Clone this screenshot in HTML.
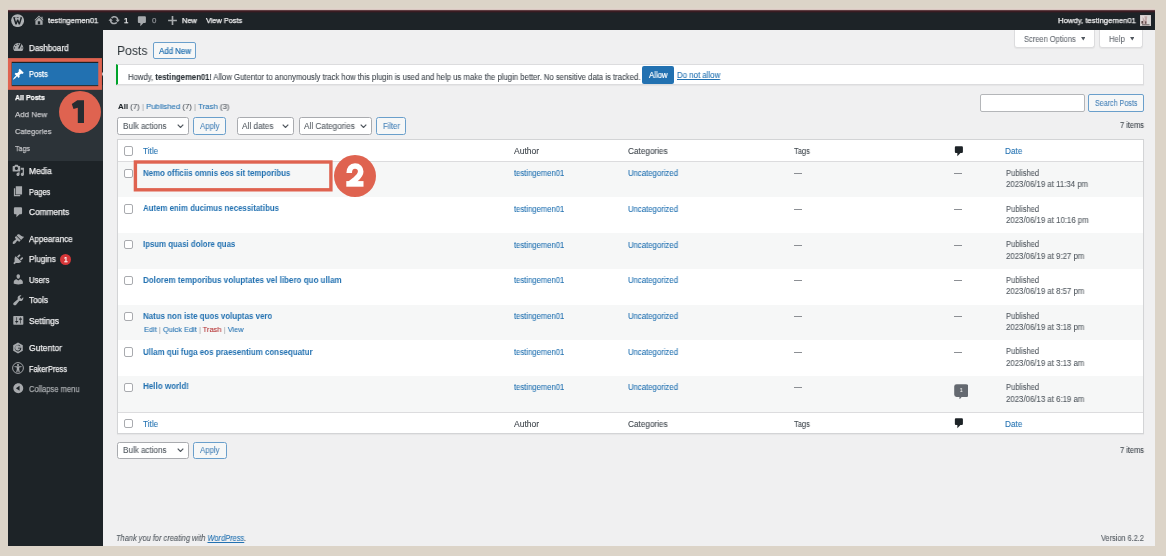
<!DOCTYPE html>
<html><head><meta charset="utf-8"><title>Posts</title>
<style>
html,body{margin:0;padding:0;}
body{width:1166px;height:556px;overflow:hidden;background:#dcd4c8;position:relative;font-family:"Liberation Sans", sans-serif;}
.r{position:absolute;}
.t{position:absolute;white-space:nowrap;transform-origin:0 50%;will-change:transform;-webkit-text-stroke:0.08px currentColor;}
</style></head><body>
<div class="r" style="left:8.00px;top:10.00px;width:1147.00px;height:536.00px;background:#f0f0f1;"></div>
<div class="r" style="left:8.00px;top:10.00px;width:1147.00px;height:20.00px;background:#1d2327;"></div>
<div class="r" style="left:8.00px;top:8.00px;width:1147.00px;height:1.00px;background:#e0d3cb;"></div>
<div class="r" style="left:8.00px;top:9.00px;width:1147.00px;height:1.00px;background:#d8c6c0;"></div>
<div class="r" style="left:8.00px;top:10.00px;width:1147.00px;height:1.00px;background:#5d3c41;"></div>
<div class="r" style="left:8.00px;top:11.00px;width:1147.00px;height:1.00px;background:#3b1c22;"></div>
<div class="r" style="left:8.00px;top:12.00px;width:1147.00px;height:1.00px;background:#281f24;"></div>
<div class="r" style="left:8.00px;top:30.00px;width:95.00px;height:516.00px;background:#1d2327;"></div>
<svg class="r" style="left:11px;top:14px" width="13.2" height="13.2" viewBox="0 0 20 20"><circle cx="10" cy="10" r="9.8" fill="#aeb1b4"/><path d="M4.6 5.6 L7.6 15.6 L10.1 8.6 L12.6 15.6 L15.6 5.6" fill="none" stroke="#1d2327" stroke-width="2.1" stroke-linejoin="bevel"/><path d="M3.2 5.4 H6.8 M8.6 5.4 H11.6 M14.2 5.4 H16.8" stroke="#1d2327" stroke-width="1"/></svg>
<svg class="r" style="left:32.6px;top:14.4px" width="12" height="12" viewBox="0 0 20 20"><path d="M16 8.5l1.53 1.53-1.06 1.06L10 4.62l-6.47 6.47-1.06-1.06L10 2.5l4 4v-2h2v4zm-6-2.46l6 5.99V18H4v-5.97zM12 17v-5H8v5h4z" fill="#a7aaad" fill-rule="evenodd"/></svg>
<div class="t" style="left:48.10px;top:17.11px;font-size:7.90px;line-height:7.90px;color:#f0f0f1;transform:scaleX(0.9725);-webkit-text-stroke:0.25px currentColor;">testingemen01</div>
<svg class="r" style="left:107.6px;top:14.2px" width="12.4" height="12.4" viewBox="0 0 20 20"><path d="M10.2 3.28c3.53 0 6.43 2.61 6.92 6h2.080l-3.5 4-3.5-4h2.32c-.45-1.97-2.21-3.45-4.32-3.45-1.45 0-2.73.71-3.54 1.78L4.95 5.66C6.23 4.2 8.11 3.28 10.2 3.28zm-.4 13.44c-3.52 0-6.43-2.61-6.92-6H.8l3.5-4c1.17 1.33 2.33 2.67 3.5 4H5.48c.45 1.97 2.21 3.45 4.32 3.45 1.45 0 2.73-.71 3.54-1.78l1.71 1.95c-1.28 1.46-3.15 2.38-5.25 2.38z" fill="#a7aaad"/></svg>
<div class="t" style="left:124.30px;top:17.11px;font-size:7.90px;line-height:7.90px;color:#f0f0f1;transform:scaleX(1.0000);-webkit-text-stroke:0.25px currentColor;">1</div>
<svg class="r" style="left:136.2px;top:14.6px" width="12.4" height="12.4" viewBox="0 0 20 20"><path d="M5 2h9c1.1 0 2 .9 2 2v7c0 1.1-.9 2-2 2h-2l-5 5v-5H5c-1.1 0-2-.9-2-2V4c0-1.1.9-2 2-2z" fill="#a7aaad"/></svg>
<div class="t" style="left:152.30px;top:17.11px;font-size:7.90px;line-height:7.90px;color:#8c8f94;transform:scaleX(1.0000);-webkit-text-stroke:0.25px currentColor;">0</div>
<svg class="r" style="left:166.6px;top:15px" width="11" height="11" viewBox="0 0 20 20"><path d="M8.5 2 H11.5 V8.5 H18 V11.5 H11.5 V18 H8.5 V11.5 H2 V8.5 H8.5 Z" fill="#a7aaad"/></svg>
<div class="t" style="left:181.90px;top:17.11px;font-size:7.90px;line-height:7.90px;color:#f0f0f1;transform:scaleX(0.9479);-webkit-text-stroke:0.25px currentColor;">New</div>
<div class="t" style="left:205.80px;top:17.11px;font-size:7.90px;line-height:7.90px;color:#f0f0f1;transform:scaleX(0.9298);-webkit-text-stroke:0.25px currentColor;">View Posts</div>
<div class="t" style="left:1058.00px;top:16.91px;font-size:7.90px;line-height:7.90px;color:#f0f0f1;transform:scaleX(0.9778);-webkit-text-stroke:0.25px currentColor;">Howdy, testingemen01</div>
<svg class="r" style="left:1140px;top:14.7px" width="11.1" height="11.1" viewBox="0 0 11 11"><rect width="11" height="11" fill="#c9c3c2"/><rect x="0.6" y="0.6" width="9.8" height="9.8" fill="#e2dcdb"/><path d="M2.5 1.5 L5 5.5 L4.6 9 L3 9 L2.8 6 Z" fill="#bfa9a8"/><path d="M4.3 1.2 H7.5 L6.8 5 L6.2 9 H4.8 L5 5 Z" fill="#c0aaa9"/><rect x="1.4" y="6" width="1.6" height="2.6" fill="#5a4646"/><rect x="5" y="6.3" width="1.4" height="2.4" fill="#6a5252"/><rect x="2" y="9.3" width="7.5" height="0.9" fill="#4a4040"/><rect x="7.4" y="1" width="2.8" height="8" fill="#d8d8d6"/></svg>
<div class="r" style="left:8.00px;top:85.00px;width:95.00px;height:76.00px;background:#2c3338;"></div>
<div class="r" style="left:11.50px;top:63.00px;width:87.00px;height:22.20px;background:#2271b1;"></div>
<div class="t" style="left:29.40px;top:43.52px;font-size:8.60px;line-height:8.60px;color:#f0f0f1;transform:scaleX(0.9413);-webkit-text-stroke:0.25px currentColor;">Dashboard</div>
<div class="t" style="left:29.20px;top:70.32px;font-size:8.60px;line-height:8.60px;color:#fff;transform:scaleX(0.8741);-webkit-text-stroke:0.25px currentColor;">Posts</div>
<div class="t" style="left:14.50px;top:94.13px;font-size:8.00px;line-height:8.00px;color:#fff;transform:scaleX(0.8735);-webkit-text-stroke:0.25px currentColor;"><span style="font-weight:bold;">All Posts</span></div>
<div class="t" style="left:14.50px;top:111.13px;font-size:8.00px;line-height:8.00px;color:#c3c4c7;transform:scaleX(0.9852);-webkit-text-stroke:0.25px currentColor;">Add New</div>
<div class="t" style="left:14.50px;top:128.03px;font-size:8.00px;line-height:8.00px;color:#c3c4c7;transform:scaleX(0.9409);-webkit-text-stroke:0.25px currentColor;">Categories</div>
<div class="t" style="left:14.50px;top:144.73px;font-size:8.00px;line-height:8.00px;color:#c3c4c7;transform:scaleX(0.8819);-webkit-text-stroke:0.25px currentColor;">Tags</div>
<div class="t" style="left:29.00px;top:166.52px;font-size:8.60px;line-height:8.60px;color:#f0f0f1;transform:scaleX(0.9686);-webkit-text-stroke:0.25px currentColor;">Media</div>
<div class="t" style="left:29.00px;top:187.52px;font-size:8.60px;line-height:8.60px;color:#f0f0f1;transform:scaleX(0.8777);-webkit-text-stroke:0.25px currentColor;">Pages</div>
<div class="t" style="left:29.00px;top:208.02px;font-size:8.60px;line-height:8.60px;color:#f0f0f1;transform:scaleX(0.9668);-webkit-text-stroke:0.25px currentColor;">Comments</div>
<div class="t" style="left:29.00px;top:235.22px;font-size:8.60px;line-height:8.60px;color:#f0f0f1;transform:scaleX(0.9422);-webkit-text-stroke:0.25px currentColor;">Appearance</div>
<div class="t" style="left:29.00px;top:255.22px;font-size:8.60px;line-height:8.60px;color:#f0f0f1;transform:scaleX(0.9465);-webkit-text-stroke:0.25px currentColor;">Plugins</div>
<div class="t" style="left:29.00px;top:275.72px;font-size:8.60px;line-height:8.60px;color:#f0f0f1;transform:scaleX(0.9040);-webkit-text-stroke:0.25px currentColor;">Users</div>
<div class="t" style="left:29.00px;top:296.02px;font-size:8.60px;line-height:8.60px;color:#f0f0f1;transform:scaleX(0.9516);-webkit-text-stroke:0.25px currentColor;">Tools</div>
<div class="t" style="left:29.00px;top:316.72px;font-size:8.60px;line-height:8.60px;color:#f0f0f1;transform:scaleX(0.9655);-webkit-text-stroke:0.25px currentColor;">Settings</div>
<div class="t" style="left:29.20px;top:343.92px;font-size:8.60px;line-height:8.60px;color:#f0f0f1;transform:scaleX(0.9862);-webkit-text-stroke:0.25px currentColor;">Gutentor</div>
<div class="t" style="left:29.20px;top:364.52px;font-size:8.60px;line-height:8.60px;color:#f0f0f1;transform:scaleX(0.8644);-webkit-text-stroke:0.25px currentColor;">FakerPress</div>
<div class="t" style="left:29.20px;top:384.72px;font-size:8.60px;line-height:8.60px;color:#a7aaad;transform:scaleX(0.8821);-webkit-text-stroke:0.25px currentColor;">Collapse menu</div>
<div class="r" style="left:59.5px;top:254.4px;width:11px;height:11px;border-radius:50%;background:#d63638;"></div>
<div class="t" style="left:63.60px;top:257.01px;font-size:6.60px;line-height:6.60px;color:#fff;transform:scaleX(1.0000);-webkit-text-stroke:0.25px currentColor;">1</div>
<svg class="r" style="left:11.9px;top:41.1px" width="12.6" height="12.6" viewBox="0 0 20 20"><path d="M3.76 16h12.48c1.1-1.37 1.76-3.11 1.76-5 0-4.42-3.58-8-8-8s-8 3.58-8 8c0 1.89.66 3.630 1.76 5zM10 4c.55 0 1 .45 1 1s-.45 1-1 1-1-.45-1-1 .45-1 1-1zM6 6c.55 0 1 .45 1 1s-.45 1-1 1-1-.45-1-1 .45-1 1-1zm8.22-1.38c.55.28.78.94.51 1.5l-2.72 5.63c-.28.55-.95.78-1.5.5-.55-.27-.78-.94-.5-1.490l2.71-5.63c.28-.55.95-.78 1.5-.51zM4 10c.55 0 1 .45 1 1s-.45 1-1 1-1-.45-1-1 .45-1 1-1zm12 0c.55 0 1 .45 1 1s-.45 1-1 1-1-.45-1-1 .45-1 1-1z" fill="#a7aaad" fill-rule="evenodd"/></svg>
<svg class="r" style="left:11.9px;top:67.9px" width="12.6" height="12.6" viewBox="0 0 20 20"><path d="M10.44 3.02l1.82-1.82 6.36 6.35-1.83 1.82c-1.05-.68-2.48-.57-3.410.36l-.75.75c-.92.93-1.04 2.35-.35 3.41l-1.83 1.82-2.41-2.41-2.8 2.79c-.42.42-3.38 2.71-3.8 2.29s1.86-3.39 2.28-3.81l2.79-2.79L4.1 9.36l1.83-1.82c1.05.69 2.48.57 3.4-.36l.75-.75c.93-.92 1.05-2.35.36-3.41z" fill="#fff" fill-rule="evenodd"/></svg>
<svg class="r" style="left:11.9px;top:164.1px" width="12.6" height="12.6" viewBox="0 0 20 20"><path d="M13 11V4c0-.55-.45-1-1-1h-1.67L9 1H5L3.67 3H2c-.55 0-1 .45-1 1v7c0 .55.45 1 1 1h10c.55 0 1-.45 1-1zM7 4.5c1.38 0 2.5 1.12 2.5 2.5S8.38 9.5 7 9.5 4.5 8.38 4.5 7 5.62 4.5 7 4.5zM14 6h5v10.5c0 1.38-1.12 2.5-2.5 2.5S14 17.88 14 16.5s1.12-2.5 2.5-2.5c.17 0 .34.02.5.05V9h-3V6zm-4 8.05V13h2v3.5c0 1.38-1.12 2.5-2.5 2.5S7 17.88 7 16.5 8.12 14 9.5 14c.17 0 .34.02.5.05z" fill="#a7aaad" fill-rule="evenodd"/></svg>
<svg class="r" style="left:11.9px;top:185.1px" width="12.6" height="12.6" viewBox="0 0 20 20"><path d="M6 15V2h10v13H6zm-1 1h8v2H3V5h2v11z" fill="#a7aaad" fill-rule="evenodd"/></svg>
<svg class="r" style="left:11.9px;top:205.6px" width="12.6" height="12.6" viewBox="0 0 20 20"><path d="M5 2h9c1.1 0 2 .9 2 2v7c0 1.1-.9 2-2 2h-2l-5 5v-5H5c-1.1 0-2-.9-2-2V4c0-1.1.9-2 2-2z" fill="#a7aaad" fill-rule="evenodd"/></svg>
<svg class="r" style="left:11.9px;top:232.8px" width="12.6" height="12.6" viewBox="0 0 20 20"><path d="M14.48 11.06L7.41 3.99l1.5-1.5c.5-.56 2.3-.47 3.51.32 1.21.8 1.43 1.28 2.91 2.1 1.18.64 2.45 1.26 4.45.85zm-.71.71L6.7 4.7 4.93 6.470c-.39.39-.39 1.02 0 1.41l1.06 1.06c.39.39.39 1.03 0 1.42-.6.6-1.43 1.11-2.21 1.69-.35.26-.7.53-1.01.84C1.43 14.23.4 16.08 1.4 17.07c.99 1 2.84-.03 4.18-1.36.31-.31.58-.66.85-1.02.57-.78 1.08-1.61 1.69-2.21.39-.39 1.02-.39 1.41 0l1.06 1.06c.39.39 1.02.39 1.41 0z" fill="#a7aaad" fill-rule="evenodd"/></svg>
<svg class="r" style="left:11.9px;top:252.8px" width="12.6" height="12.6" viewBox="0 0 20 20"><path d="M13.11 4.36L9.87 7.6 8 5.73l3.24-3.24c.35-.34 1.05-.2 1.56.32.52.51.66 1.21.31 1.55zm-8 1.77l.91-1.12 9.01 9.01-1.19.84c-.71.71-2.63 1.16-3.82 1.16H6.14L4.9 17.26c-.59.59-1.54.59-2.12 0-.59-.58-.59-1.53 0-2.12l1.24-1.24v-3.88c0-1.13.4-3.19 1.09-3.89zm7.26 3.97l3.24-3.24c.34-.35 1.04-.21 1.55.31.52.51.66 1.21.31 1.55l-3.24 3.25z" fill="#a7aaad" fill-rule="evenodd"/></svg>
<svg class="r" style="left:11.9px;top:273.3px" width="12.6" height="12.6" viewBox="0 0 20 20"><path d="M10 9.25c-2.27 0-2.73-3.44-2.73-3.44C7 4.02 7.82 2 9.97 2c2.16 0 2.98 2.02 2.71 3.81 0 0-.41 3.44-2.68 3.44zm0 2.57L12.72 10c2.39 0 4.52 2.33 4.52 4.53v2.49s-3.65 1.13-7.24 1.13c-3.65 0-7.24-1.13-7.24-1.13v-2.49c0-2.25 1.94-4.48 4.47-4.48z" fill="#a7aaad" fill-rule="evenodd"/></svg>
<svg class="r" style="left:11.9px;top:293.6px" width="12.6" height="12.6" viewBox="0 0 20 20"><path d="M16.68 9.77c-1.34 1.34-3.3 1.67-4.95.99l-5.41 6.52c-.99.99-2.59.99-3.58 0s-.99-2.59 0-3.57l6.52-5.42c-.68-1.65-.35-3.61.99-4.95 1.28-1.28 3.12-1.62 4.72-1.06l-2.89 2.89 2.82 2.82 2.86-2.87c.53 1.58.18 3.39-1.08 4.65z" fill="#a7aaad" fill-rule="evenodd"/></svg>
<svg class="r" style="left:11.9px;top:314.3px" width="12.6" height="12.6" viewBox="0 0 20 20"><path d="M18 16V4c0-.55-.45-1-1-1H3c-.55 0-1 .45-1 1v12c0 .55.45 1 1 1h14c.55 0 1-.45 1-1zM8 11h1c.55 0 1 .45 1 1s-.45 1-1 1H8v1.5c0 .28-.22.5-.5.5s-.5-.22-.5-.5V13H6c-.55 0-1-.45-1-1s.45-1 1-1h1V5.5c0-.28.22-.5.5-.5s.5.22.5.5V11zm5-2h-1c-.55 0-1-.45-1-1s.45-1 1-1h1V5.5c0-.28.22-.5.5-.5s.5.22.5.5V7h1c.55 0 1 .45 1 1s-.45 1-1 1h-1v5.5c0 .28-.22.5-.5.5s-.5-.22-.5-.5V9z" fill="#a7aaad" fill-rule="evenodd"/></svg>
<svg class="r" style="left:12.2px;top:341.6px" width="12" height="12" viewBox="0 0 20 20"><path d="M10 1 L18 5.5 V14.5 L10 19 L2 14.5 V5.5 Z" fill="#a7aaad"/><path d="M13.5 7.5 A4.5 4.5 0 1 0 14 11 H10 V9.5 H15.5 V10.5 A5.5 5.5 0 1 1 14 6.5 Z" fill="#1d2327"/></svg>
<svg class="r" style="left:12.2px;top:362px" width="12" height="12" viewBox="0 0 20 20"><circle cx="10" cy="10" r="9" fill="none" stroke="#a7aaad" stroke-width="1.6"/><circle cx="10" cy="5" r="1.8" fill="#a7aaad"/><path d="M4 7 H16 V8.5 L12 9 V12 L13 17 H11 L10 13 L9 17 H7 L8 12 V9 L4 8.5 Z" fill="#a7aaad"/></svg>
<svg class="r" style="left:11.9px;top:382.3px" width="12.6" height="12.6" viewBox="0 0 20 20"><path d="M10 2.16c4.33 0 7.84 3.51 7.84 7.84s-3.51 7.84-7.84 7.84S2.16 14.33 2.16 10 5.71 2.16 10 2.16zm2 11.72V6.120L6.18 9.97z" fill="#a7aaad" fill-rule="evenodd"/></svg>
<svg class="r" style="left:0;top:0" width="1166" height="556"><rect x="9.8" y="59.95" width="90.3" height="28.05" fill="none" stroke="#df6350" stroke-width="3.7"/></svg>
<div class="r" style="left:58.7px;top:90.7px;width:42.4px;height:42.4px;border-radius:50%;background:#df6350;"></div>
<svg class="r" style="left:0;top:0" width="1166" height="556"><path d="M71.8 103.9 L77.3 100.3 L84 100.3 L84 122.9 L77.8 122.9 L77.8 107.7 L73.5 108.9 Z" fill="#262c31"/></svg>
<svg class="r" style="left:101.5px;top:70px" width="1.6" height="8" viewBox="0 0 1.6 8"><path d="M1.6 0 L0 4 L1.6 8 Z" fill="#e8e8ea"/></svg>
<div class="t" style="left:117.00px;top:44.43px;font-size:13.20px;line-height:13.20px;color:#2c3338;transform:scaleX(0.9208);-webkit-text-stroke:0;">Posts</div>
<div class="r" style="left:153.00px;top:42.30px;width:43.40px;height:16.60px;box-sizing:border-box;border:1px solid #6a9fcb;border-radius:2px;background:#f6f7f7;"></div>
<div class="t" style="left:159.00px;top:47.17px;font-size:8.30px;line-height:8.30px;color:#2271b1;transform:scaleX(0.9496);-webkit-text-stroke:0.2px #2271b1;">Add New</div>
<div class="r" style="left:1013.70px;top:30.00px;width:81.00px;height:18.00px;box-sizing:border-box;border:1px solid #dcdcde;border-top:none;border-radius:0 0 3px 3px;background:#fff;box-shadow:0 1px 1px rgba(0,0,0,.05);"></div>
<div class="t" style="left:1024.00px;top:34.87px;font-size:8.30px;line-height:8.30px;color:#646970;transform:scaleX(0.9037);">Screen Options</div>
<svg class="r" style="left:1080.7px;top:37px" width="4.5" height="3.5" viewBox="0 0 10 8"><path d="M0 0 H10 L5 8 Z" fill="#50575e"/></svg>
<div class="r" style="left:1098.80px;top:30.00px;width:44.50px;height:18.00px;box-sizing:border-box;border:1px solid #dcdcde;border-top:none;border-radius:0 0 3px 3px;background:#fff;box-shadow:0 1px 1px rgba(0,0,0,.05);"></div>
<div class="t" style="left:1109.00px;top:34.87px;font-size:8.30px;line-height:8.30px;color:#646970;transform:scaleX(0.9254);">Help</div>
<svg class="r" style="left:1129.6px;top:37px" width="4.5" height="3.5" viewBox="0 0 10 8"><path d="M0 0 H10 L5 8 Z" fill="#50575e"/></svg>
<div class="r" style="left:116.00px;top:64.30px;width:1027.50px;height:20.60px;box-sizing:border-box;border:1px solid #dcdcde;border-left:2.6px solid #00a32a;background:#fff;box-shadow:0 1px 1px rgba(0,0,0,.04);"></div>
<div class="t" style="left:127.50px;top:72.97px;font-size:8.30px;line-height:8.30px;color:#3c434a;transform:scaleX(0.9318);">Howdy, <span style="font-weight:bold;color:#2c3338;">testingemen01</span>! Allow Gutentor to anonymously track how this plugin is used and help us make the plugin better. No sensitive data is tracked.</div>
<div class="r" style="left:642.00px;top:66.00px;width:32.20px;height:17.60px;background:#2271b1;border-radius:2px;"></div>
<div class="t" style="left:649.20px;top:71.17px;font-size:8.30px;line-height:8.30px;color:#fff;transform:scaleX(0.9365);-webkit-text-stroke:0.2px #fff;">Allow</div>
<div class="t" style="left:676.80px;top:71.17px;font-size:8.30px;line-height:8.30px;color:#2271b1;transform:scaleX(0.9453);"><span style="text-decoration:underline;">Do not allow</span></div>
<div class="t" style="left:118.20px;top:103.21px;font-size:7.90px;line-height:7.90px;color:#50575e;transform:scaleX(0.9865);"><span style="font-weight:bold;color:#1d2327;">All</span><span style="color:#50575e;"> (7) </span><span style="color:#a7aaad;">|</span> <span style="color:#2271b1;">Published</span><span style="color:#50575e;"> (7) </span><span style="color:#a7aaad;">|</span> <span style="color:#2271b1;">Trash</span><span style="color:#50575e;"> (3)</span></div>
<div class="r" style="left:979.80px;top:94.20px;width:105.50px;height:17.40px;box-sizing:border-box;border:1px solid #b4b6b9;border-radius:2px;background:#fff;"></div>
<div class="r" style="left:1088.00px;top:94.20px;width:55.50px;height:17.40px;box-sizing:border-box;border:1px solid #6a9fcb;border-radius:2px;background:#f6f7f7;"></div>
<div class="t" style="left:1095.00px;top:98.57px;font-size:8.30px;line-height:8.30px;color:#4682b8;transform:scaleX(0.8590);">Search Posts</div>
<div class="t" style="left:1119.50px;top:121.37px;font-size:8.30px;line-height:8.30px;color:#3c434a;transform:scaleX(0.8972);">7 items</div>
<div class="r" style="left:117.40px;top:117.20px;width:72.10px;height:17.40px;box-sizing:border-box;border:1px solid #a9abaf;border-radius:2.5px;background:#fff;"></div>
<div class="t" style="left:122.60px;top:121.57px;font-size:8.30px;line-height:8.30px;color:#50575e;transform:scaleX(0.9742);">Bulk actions</div>
<svg class="r" style="left:177.3px;top:123.8px" width="7" height="4.2" viewBox="0 0 10 6"><path d="M1 1 L5 5 L9 1" fill="none" stroke="#50575e" stroke-width="1.7"/></svg>
<div class="r" style="left:193.40px;top:117.20px;width:33.00px;height:17.40px;box-sizing:border-box;border:1px solid #6a9fcb;border-radius:2.5px;background:#f6f7f7;"></div>
<div class="t" style="left:200.30px;top:121.57px;font-size:8.30px;line-height:8.30px;color:#4682b8;transform:scaleX(0.9394);">Apply</div>
<div class="r" style="left:236.50px;top:117.20px;width:57.80px;height:17.40px;box-sizing:border-box;border:1px solid #a9abaf;border-radius:2.5px;background:#fff;"></div>
<div class="t" style="left:242.20px;top:121.57px;font-size:8.30px;line-height:8.30px;color:#50575e;transform:scaleX(0.9865);">All dates</div>
<svg class="r" style="left:282.1px;top:123.8px" width="7" height="4.2" viewBox="0 0 10 6"><path d="M1 1 L5 5 L9 1" fill="none" stroke="#50575e" stroke-width="1.7"/></svg>
<div class="r" style="left:299.20px;top:117.20px;width:73.30px;height:17.40px;box-sizing:border-box;border:1px solid #a9abaf;border-radius:2.5px;background:#fff;"></div>
<div class="t" style="left:304.10px;top:121.57px;font-size:8.30px;line-height:8.30px;color:#50575e;transform:scaleX(0.9851);">All Categories</div>
<svg class="r" style="left:360.3px;top:123.8px" width="7" height="4.2" viewBox="0 0 10 6"><path d="M1 1 L5 5 L9 1" fill="none" stroke="#50575e" stroke-width="1.7"/></svg>
<div class="r" style="left:376.30px;top:117.20px;width:30.10px;height:17.40px;box-sizing:border-box;border:1px solid #6a9fcb;border-radius:2.5px;background:#f6f7f7;"></div>
<div class="t" style="left:383.00px;top:121.57px;font-size:8.30px;line-height:8.30px;color:#4682b8;transform:scaleX(0.9164);">Filter</div>
<div class="r" style="left:116.50px;top:139.10px;width:1027.30px;height:295.30px;box-sizing:border-box;border:1px solid #d3d4d6;background:#fff;box-shadow:0 1px 1px rgba(0,0,0,.04);"></div>
<div class="r" style="left:117.50px;top:161.20px;width:1025.30px;height:1.00px;background:#dcdcde;"></div>
<div class="r" style="left:117.50px;top:161.70px;width:1025.30px;height:35.70px;background:#f6f7f7;"></div>
<div class="r" style="left:117.50px;top:233.10px;width:1025.30px;height:35.70px;background:#f6f7f7;"></div>
<div class="r" style="left:117.50px;top:304.50px;width:1025.30px;height:35.70px;background:#f6f7f7;"></div>
<div class="r" style="left:117.50px;top:375.90px;width:1025.30px;height:35.70px;background:#f6f7f7;"></div>
<div class="r" style="left:117.50px;top:411.60px;width:1025.30px;height:1.00px;background:#dcdcde;"></div>
<div class="r" style="left:123.50px;top:146.30px;width:9.40px;height:9.40px;box-sizing:border-box;border:1px solid #a9abaf;border-radius:2px;background:#fff;"></div>
<div class="t" style="left:142.60px;top:147.17px;font-size:8.30px;line-height:8.30px;color:#2271b1;transform:scaleX(0.9823);">Title</div>
<div class="t" style="left:513.50px;top:147.17px;font-size:8.30px;line-height:8.30px;color:#3c434a;transform:scaleX(1.0306);">Author</div>
<div class="t" style="left:627.70px;top:147.17px;font-size:8.30px;line-height:8.30px;color:#3c434a;transform:scaleX(0.9866);">Categories</div>
<div class="t" style="left:794.40px;top:147.17px;font-size:8.30px;line-height:8.30px;color:#3c434a;transform:scaleX(0.9013);">Tags</div>
<svg class="r" style="left:953px;top:145.10000000000002px" width="12.4" height="12.4" viewBox="0 0 20 20"><path d="M5 2h9c1.1 0 2 .9 2 2v7c0 1.1-.9 2-2 2h-2l-5 5v-5H5c-1.1 0-2-.9-2-2V4c0-1.1.9-2 2-2z" fill="#1d2327" fill-rule="evenodd"/></svg>
<div class="t" style="left:1004.70px;top:147.17px;font-size:8.30px;line-height:8.30px;color:#2271b1;transform:scaleX(0.9869);">Date</div>
<div class="r" style="left:123.50px;top:418.50px;width:9.40px;height:9.40px;box-sizing:border-box;border:1px solid #a9abaf;border-radius:2px;background:#fff;"></div>
<div class="t" style="left:142.60px;top:419.67px;font-size:8.30px;line-height:8.30px;color:#2271b1;transform:scaleX(0.9823);">Title</div>
<div class="t" style="left:513.50px;top:419.67px;font-size:8.30px;line-height:8.30px;color:#3c434a;transform:scaleX(1.0306);">Author</div>
<div class="t" style="left:627.70px;top:419.67px;font-size:8.30px;line-height:8.30px;color:#3c434a;transform:scaleX(0.9866);">Categories</div>
<div class="t" style="left:794.40px;top:419.67px;font-size:8.30px;line-height:8.30px;color:#3c434a;transform:scaleX(0.9013);">Tags</div>
<svg class="r" style="left:953px;top:417.3px" width="12.4" height="12.4" viewBox="0 0 20 20"><path d="M5 2h9c1.1 0 2 .9 2 2v7c0 1.1-.9 2-2 2h-2l-5 5v-5H5c-1.1 0-2-.9-2-2V4c0-1.1.9-2 2-2z" fill="#1d2327" fill-rule="evenodd"/></svg>
<div class="t" style="left:1004.70px;top:419.67px;font-size:8.30px;line-height:8.30px;color:#2271b1;transform:scaleX(0.9869);">Date</div>
<div class="r" style="left:123.50px;top:168.70px;width:9.40px;height:9.40px;box-sizing:border-box;border:1px solid #a9abaf;border-radius:2px;background:#fff;"></div>
<div class="t" style="left:143.40px;top:169.24px;font-size:8.70px;line-height:8.70px;color:#2271b1;transform:scaleX(0.9087);-webkit-text-stroke:0;"><span style="font-weight:bold;">Nemo officiis omnis eos sit temporibus</span></div>
<div class="t" style="left:513.50px;top:169.27px;font-size:8.30px;line-height:8.30px;color:#2271b1;transform:scaleX(0.9238);">testingemen01</div>
<div class="t" style="left:627.70px;top:169.27px;font-size:8.30px;line-height:8.30px;color:#2271b1;transform:scaleX(0.9343);">Uncategorized</div>
<div class="r" style="left:794.00px;top:173.10px;width:7.80px;height:1.10px;background:#8c8f94;"></div>
<div class="r" style="left:954.00px;top:173.10px;width:7.80px;height:1.10px;background:#8c8f94;"></div>
<div class="t" style="left:1005.80px;top:168.87px;font-size:8.30px;line-height:8.30px;color:#50575e;transform:scaleX(0.9080);">Published</div>
<div class="t" style="left:1005.80px;top:180.37px;font-size:8.30px;line-height:8.30px;color:#50575e;transform:scaleX(0.9441);">2023/06/19 at 11:34 pm</div>
<div class="r" style="left:123.50px;top:204.40px;width:9.40px;height:9.40px;box-sizing:border-box;border:1px solid #a9abaf;border-radius:2px;background:#fff;"></div>
<div class="t" style="left:143.40px;top:203.84px;font-size:8.70px;line-height:8.70px;color:#2271b1;transform:scaleX(0.9029);-webkit-text-stroke:0;"><span style="font-weight:bold;">Autem enim ducimus necessitatibus</span></div>
<div class="t" style="left:513.50px;top:204.97px;font-size:8.30px;line-height:8.30px;color:#2271b1;transform:scaleX(0.9238);">testingemen01</div>
<div class="t" style="left:627.70px;top:204.97px;font-size:8.30px;line-height:8.30px;color:#2271b1;transform:scaleX(0.9343);">Uncategorized</div>
<div class="r" style="left:794.00px;top:208.80px;width:7.80px;height:1.10px;background:#8c8f94;"></div>
<div class="r" style="left:954.00px;top:208.80px;width:7.80px;height:1.10px;background:#8c8f94;"></div>
<div class="t" style="left:1005.80px;top:204.57px;font-size:8.30px;line-height:8.30px;color:#50575e;transform:scaleX(0.9080);">Published</div>
<div class="t" style="left:1005.80px;top:216.07px;font-size:8.30px;line-height:8.30px;color:#50575e;transform:scaleX(0.9441);">2023/06/19 at 10:16 pm</div>
<div class="r" style="left:123.50px;top:240.10px;width:9.40px;height:9.40px;box-sizing:border-box;border:1px solid #a9abaf;border-radius:2px;background:#fff;"></div>
<div class="t" style="left:143.40px;top:239.74px;font-size:8.70px;line-height:8.70px;color:#2271b1;transform:scaleX(0.9016);-webkit-text-stroke:0;"><span style="font-weight:bold;">Ipsum quasi dolore quas</span></div>
<div class="t" style="left:513.50px;top:240.67px;font-size:8.30px;line-height:8.30px;color:#2271b1;transform:scaleX(0.9238);">testingemen01</div>
<div class="t" style="left:627.70px;top:240.67px;font-size:8.30px;line-height:8.30px;color:#2271b1;transform:scaleX(0.9343);">Uncategorized</div>
<div class="r" style="left:794.00px;top:244.50px;width:7.80px;height:1.10px;background:#8c8f94;"></div>
<div class="r" style="left:954.00px;top:244.50px;width:7.80px;height:1.10px;background:#8c8f94;"></div>
<div class="t" style="left:1005.80px;top:240.27px;font-size:8.30px;line-height:8.30px;color:#50575e;transform:scaleX(0.9080);">Published</div>
<div class="t" style="left:1005.80px;top:251.77px;font-size:8.30px;line-height:8.30px;color:#50575e;transform:scaleX(0.9441);">2023/06/19 at 9:27 pm</div>
<div class="r" style="left:123.50px;top:275.80px;width:9.40px;height:9.40px;box-sizing:border-box;border:1px solid #a9abaf;border-radius:2px;background:#fff;"></div>
<div class="t" style="left:143.40px;top:275.94px;font-size:8.70px;line-height:8.70px;color:#2271b1;transform:scaleX(0.9246);-webkit-text-stroke:0;"><span style="font-weight:bold;">Dolorem temporibus voluptates vel libero quo ullam</span></div>
<div class="t" style="left:513.50px;top:276.37px;font-size:8.30px;line-height:8.30px;color:#2271b1;transform:scaleX(0.9238);">testingemen01</div>
<div class="t" style="left:627.70px;top:276.37px;font-size:8.30px;line-height:8.30px;color:#2271b1;transform:scaleX(0.9343);">Uncategorized</div>
<div class="r" style="left:794.00px;top:280.20px;width:7.80px;height:1.10px;background:#8c8f94;"></div>
<div class="r" style="left:954.00px;top:280.20px;width:7.80px;height:1.10px;background:#8c8f94;"></div>
<div class="t" style="left:1005.80px;top:275.97px;font-size:8.30px;line-height:8.30px;color:#50575e;transform:scaleX(0.9080);">Published</div>
<div class="t" style="left:1005.80px;top:287.47px;font-size:8.30px;line-height:8.30px;color:#50575e;transform:scaleX(0.9441);">2023/06/19 at 8:57 pm</div>
<div class="r" style="left:123.50px;top:311.50px;width:9.40px;height:9.40px;box-sizing:border-box;border:1px solid #a9abaf;border-radius:2px;background:#fff;"></div>
<div class="t" style="left:143.40px;top:312.24px;font-size:8.70px;line-height:8.70px;color:#2271b1;transform:scaleX(0.9112);-webkit-text-stroke:0;"><span style="font-weight:bold;">Natus non iste quos voluptas vero</span></div>
<div class="t" style="left:513.50px;top:312.07px;font-size:8.30px;line-height:8.30px;color:#2271b1;transform:scaleX(0.9238);">testingemen01</div>
<div class="t" style="left:627.70px;top:312.07px;font-size:8.30px;line-height:8.30px;color:#2271b1;transform:scaleX(0.9343);">Uncategorized</div>
<div class="r" style="left:794.00px;top:315.90px;width:7.80px;height:1.10px;background:#8c8f94;"></div>
<div class="r" style="left:954.00px;top:315.90px;width:7.80px;height:1.10px;background:#8c8f94;"></div>
<div class="t" style="left:1005.80px;top:311.67px;font-size:8.30px;line-height:8.30px;color:#50575e;transform:scaleX(0.9080);">Published</div>
<div class="t" style="left:1005.80px;top:323.17px;font-size:8.30px;line-height:8.30px;color:#50575e;transform:scaleX(0.9441);">2023/06/19 at 3:18 pm</div>
<div class="t" style="left:143.70px;top:326.01px;font-size:7.90px;line-height:7.90px;color:#2271b1;transform:scaleX(0.9429);"><span style="color:#2271b1;">Edit</span><span style="color:#a7aaad;"> | </span><span style="color:#2271b1;">Quick Edit</span><span style="color:#a7aaad;"> | </span><span style="color:#b32d2e;">Trash</span><span style="color:#a7aaad;"> | </span><span style="color:#2271b1;">View</span></div>
<div class="r" style="left:123.50px;top:347.20px;width:9.40px;height:9.40px;box-sizing:border-box;border:1px solid #a9abaf;border-radius:2px;background:#fff;"></div>
<div class="t" style="left:143.40px;top:347.64px;font-size:8.70px;line-height:8.70px;color:#2271b1;transform:scaleX(0.9123);-webkit-text-stroke:0;"><span style="font-weight:bold;">Ullam qui fuga eos praesentium consequatur</span></div>
<div class="t" style="left:513.50px;top:347.77px;font-size:8.30px;line-height:8.30px;color:#2271b1;transform:scaleX(0.9238);">testingemen01</div>
<div class="t" style="left:627.70px;top:347.77px;font-size:8.30px;line-height:8.30px;color:#2271b1;transform:scaleX(0.9343);">Uncategorized</div>
<div class="r" style="left:794.00px;top:351.60px;width:7.80px;height:1.10px;background:#8c8f94;"></div>
<div class="r" style="left:954.00px;top:351.60px;width:7.80px;height:1.10px;background:#8c8f94;"></div>
<div class="t" style="left:1005.80px;top:347.37px;font-size:8.30px;line-height:8.30px;color:#50575e;transform:scaleX(0.9080);">Published</div>
<div class="t" style="left:1005.80px;top:358.87px;font-size:8.30px;line-height:8.30px;color:#50575e;transform:scaleX(0.9441);">2023/06/19 at 3:13 am</div>
<div class="r" style="left:123.50px;top:382.90px;width:9.40px;height:9.40px;box-sizing:border-box;border:1px solid #a9abaf;border-radius:2px;background:#fff;"></div>
<div class="t" style="left:143.40px;top:382.34px;font-size:8.70px;line-height:8.70px;color:#2271b1;transform:scaleX(0.9240);-webkit-text-stroke:0;"><span style="font-weight:bold;">Hello world!</span></div>
<div class="t" style="left:513.50px;top:383.47px;font-size:8.30px;line-height:8.30px;color:#2271b1;transform:scaleX(0.9238);">testingemen01</div>
<div class="t" style="left:627.70px;top:383.47px;font-size:8.30px;line-height:8.30px;color:#2271b1;transform:scaleX(0.9343);">Uncategorized</div>
<div class="r" style="left:794.00px;top:387.30px;width:7.80px;height:1.10px;background:#8c8f94;"></div>
<svg class="r" style="left:953.6px;top:383.6px" width="14.6" height="15.6" viewBox="0 0 14.6 15.6"><path d="M0.2 2.6 Q0.2 0.2 2.6 0.2 H12 Q14.4 0.2 14.4 2.6 V10.6 Q14.4 13 12 13 H7.6 L5.6 15.4 L5.4 13 H2.6 Q0.2 13 0.2 10.6 Z" fill="#646970"/></svg>
<div class="t" style="left:959.90px;top:387.32px;font-size:6.00px;line-height:6.00px;color:#f4f4f4;transform:scaleX(0.7494);"><span style="font-weight:bold;">1</span></div>
<div class="t" style="left:1005.80px;top:383.07px;font-size:8.30px;line-height:8.30px;color:#50575e;transform:scaleX(0.9080);">Published</div>
<div class="t" style="left:1005.80px;top:394.57px;font-size:8.30px;line-height:8.30px;color:#50575e;transform:scaleX(0.9441);">2023/06/13 at 6:19 am</div>
<svg class="r" style="left:0;top:0" width="1166" height="556"><rect x="135.4" y="162" width="195.5" height="27.8" fill="none" stroke="#df6350" stroke-width="3.4"/></svg>
<div class="r" style="left:333.8px;top:155px;width:42px;height:42px;border-radius:50%;background:#df6350;"></div>
<svg class="r" style="left:0;top:0" width="1166" height="556"><path d="M349.2 173 C349.2 168.4 351.6 166 355 166 C358.6 166 360.7 168.4 360.7 171.6 C360.7 174.6 358.8 176.6 355.8 179.2 L350 183.8" fill="none" stroke="#fff" stroke-width="5.6"/><rect x="346.3" y="181.1" width="17.2" height="5.6" fill="#fff"/></svg>
<div class="r" style="left:117.20px;top:441.50px;width:72.30px;height:17.40px;box-sizing:border-box;border:1px solid #a9abaf;border-radius:2.5px;background:#fff;"></div>
<div class="t" style="left:122.60px;top:445.87px;font-size:8.30px;line-height:8.30px;color:#50575e;transform:scaleX(0.9742);">Bulk actions</div>
<svg class="r" style="left:177.3px;top:448.1px" width="7" height="4.2" viewBox="0 0 10 6"><path d="M1 1 L5 5 L9 1" fill="none" stroke="#50575e" stroke-width="1.7"/></svg>
<div class="r" style="left:193.30px;top:441.50px;width:33.30px;height:17.40px;box-sizing:border-box;border:1px solid #6a9fcb;border-radius:2.5px;background:#f6f7f7;"></div>
<div class="t" style="left:200.30px;top:445.87px;font-size:8.30px;line-height:8.30px;color:#4682b8;transform:scaleX(0.9394);">Apply</div>
<div class="t" style="left:1119.50px;top:445.67px;font-size:8.30px;line-height:8.30px;color:#3c434a;transform:scaleX(0.8972);">7 items</div>
<div class="t" style="left:116.00px;top:533.77px;font-size:8.30px;line-height:8.30px;color:#50575e;transform:scaleX(0.8967);"><span style="font-style:italic;">Thank you for creating with </span><span style="font-style:italic;text-decoration:underline;color:#2271b1;">WordPress</span><span style="font-style:italic;">.</span></div>
<div class="t" style="left:1100.90px;top:534.07px;font-size:8.30px;line-height:8.30px;color:#50575e;transform:scaleX(0.8855);">Version 6.2.2</div>
</body></html>
